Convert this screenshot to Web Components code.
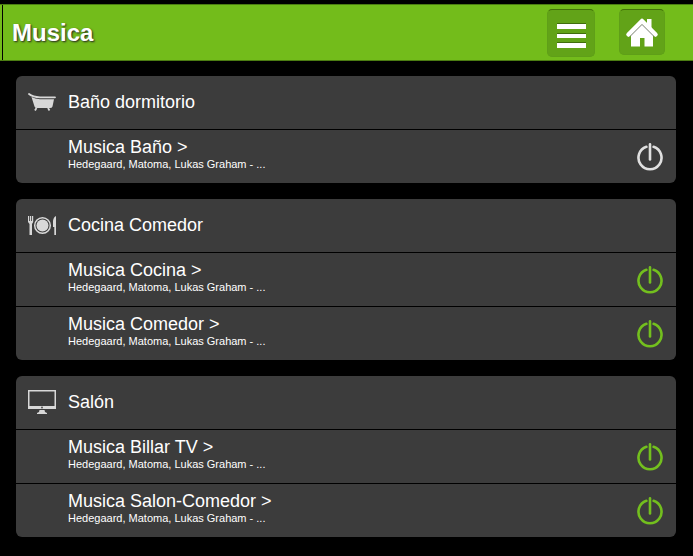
<!DOCTYPE html>
<html lang="es">
<head>
<meta charset="UTF-8">
<meta name="viewport" content="width=device-width, initial-scale=1">
<title>Musica</title>
<style>
    body {
        margin: 0;
        background: #000;
        color: #fff;
        font-family: "Liberation Sans", Arial, sans-serif;
    }
    main {
        display: flex;
        flex-direction: column;
        gap: 16px;
        padding: 15px 17px 16px 16px;
    }
</style>
</head>
<body>
<app-header heading="Musica"></app-header>
<main>
    <room-card name="Baño dormitorio" icon="bath">
        <music-zone name="Musica Baño"></music-zone>
    </room-card>
    <room-card name="Cocina Comedor" icon="dining">
        <music-zone name="Musica Cocina" on></music-zone>
        <music-zone name="Musica Comedor" on></music-zone>
    </room-card>
    <room-card name="Salón" icon="screen">
        <music-zone name="Musica Billar TV" on></music-zone>
        <music-zone name="Musica Salon-Comedor" on></music-zone>
    </room-card>
</main>

<script>
const roomIcons = {
    bath: `
        <path d="M1 4 Q5 7 12 7.3 L27 7.3" fill="none" stroke="#d8d8d8" stroke-width="1.8" stroke-linecap="round"/>
        <path d="M3.5 7 Q7 9 12 9.2 H26 L24.5 16.5 Q24 18 22 18 H9 Q7 18 6.5 16.5 Z"/>
        <path d="M8.5 18 L7 20.5 M20 18 L21.5 20.5" fill="none" stroke="#d8d8d8" stroke-width="1.8"/>`,
    dining: `
        <path d="M0 3 H1.2 V8 H2 V3 H3.2 V8 H4 V3 H5.2 V9 L4 11 V22 H1.5 V11 L0 9 Z"/>
        <circle cx="14.5" cy="12.5" r="7.8" fill="none" stroke="#d8d8d8" stroke-width="1.5"/>
        <circle cx="14.5" cy="12.5" r="6"/>
        <path d="M28 3 V22 H26.3 V14 H25 V8 Q25.5 4 28 3 Z"/>`,
    screen: `
        <path fill-rule="evenodd" d="M0 0 H28 V19 H0 Z M1.5 1.5 V16 H26.5 V1.5 Z"/>
        <circle cx="14" cy="17.5" r="1" fill="#555"/>
        <path d="M11.5 20 H16.5 L17 22 L19 23 V24 H9 V23 L11 22 Z"/>`
};

class AppHeader extends HTMLElement {
    constructor() {
        super();
        this.attachShadow({ mode: 'open' });
    }

    connectedCallback() {
        this.shadowRoot.innerHTML = `
            <style>
                :host {
                    display: block;
                    padding-top: 4px;
                }
                header {
                    display: flex;
                    align-items: flex-start;
                    box-sizing: border-box;
                    height: 57px;
                    padding: 4px 28px 0 0;
                    border: solid #4c7d12;
                    border-width: 1px 0;
                    background: linear-gradient(90deg, transparent 2px, #000 2px, #000 3px, transparent 3px) #73bc1b;
                }
                h1 {
                    flex: 1;
                    margin: 0;
                    padding-left: 12px;
                    font-size: 24px;
                    line-height: 48px;
                    text-shadow: 1px 1px 2px #222;
                }
                nav {
                    display: flex;
                    gap: 24px;
                }
                button {
                    display: block;
                    width: 48px;
                    height: 48px;
                    padding: 0;
                    border: 1px solid #5f9f18;
                    border-top-color: #417008;
                    border-radius: 5px;
                    background: #62a318;
                    cursor: pointer;
                }
                .home {
                    width: 46px;
                    height: 46px;
                }
                svg {
                    display: block;
                    width: 100%;
                    height: 100%;
                }
            </style>
            <header>
                <h1>${this.getAttribute('heading')}</h1>
                <nav>
                    <button type="button" aria-label="Menú">
                        <svg viewBox="0 0 46 46" fill="#fff">
                            <path d="M9 13 H38 V14 H9 Z M9 23 H38 V24 H9 Z M9 32 H38 V33 H9 Z" fill="#3f6d0d"/>
                            <path d="M9 14 H38 V19 H9 Z M9 24 H38 V28 H9 Z M9 33 H38 V38 H9 Z"/>
                        </svg>
                    </button>
                    <button type="button" class="home" aria-label="Inicio">
                        <svg viewBox="0 0 44 44" fill="#fff">
                            <path d="M27 9 H31.5 V19 L27 14 Z"/>
                            <path d="M11 25 L22 14 L33 25 V36.5 H24.5 V28 H20 V36.5 H11 Z"/>
                            <path d="M8.5 24.5 L22 11 L35.5 24.5" fill="none" stroke="#fff" stroke-width="4.5" stroke-linejoin="round" stroke-linecap="round"/>
                            <path d="M10 26.5 L22 14.5 L34 26.5" fill="none" stroke="#888" stroke-width="1"/>
                        </svg>
                    </button>
                </nav>
            </header>
        `;
    }
}

customElements.define('app-header', AppHeader);

class RoomCard extends HTMLElement {
    constructor() {
        super();
        this.attachShadow({ mode: 'open' });
    }

    connectedCallback() {
        this.shadowRoot.innerHTML = `
            <style>
                :host {
                    display: block;
                    overflow: hidden;
                    border-radius: 6px;
                    background: #3c3c3c;
                }
                .room {
                    display: flex;
                    align-items: center;
                    gap: 12px;
                    box-sizing: border-box;
                    height: 53px;
                    padding: 0 12px 2px;
                }
                svg {
                    width: 28px;
                    height: 24px;
                    fill: #d8d8d8;
                }
                h2 {
                    margin: 0;
                    font-size: 18px;
                    font-weight: normal;
                    line-height: 20px;
                }
            </style>
            <section>
                <div class="room">
                    <svg viewBox="0 0 28 24" aria-hidden="true">${roomIcons[this.getAttribute('icon')]}</svg>
                    <h2>${this.getAttribute('name')}</h2>
                </div>
                <slot></slot>
            </section>
        `;
    }
}

customElements.define('room-card', RoomCard);

class MusicZone extends HTMLElement {
    constructor() {
        super();
        this.attachShadow({ mode: 'open' });
    }

    connectedCallback() {
        const name = this.getAttribute('name');
        this.shadowRoot.innerHTML = `
            <style>
                :host {
                    display: flex;
                    align-items: center;
                    justify-content: space-between;
                    box-sizing: border-box;
                    height: 54px;
                    padding: 0 12px 0 52px;
                    border-top: 1px solid #000;
                }
                a {
                    display: block;
                    flex: 1;
                    padding-bottom: 6px;
                    color: inherit;
                    text-decoration: none;
                }
                .name, .track {
                    display: block;
                }
                .name {
                    font-size: 18px;
                    line-height: 20px;
                }
                .track {
                    font-size: 11px;
                    line-height: 14px;
                }
                button {
                    display: block;
                    padding: 0;
                    border: 0;
                    background: none;
                    color: #e0e0e0;
                    cursor: pointer;
                }
                :host([on]) button {
                    color: #73bf1e;
                }
                svg {
                    display: block;
                    width: 28px;
                    height: 28px;
                }
            </style>
            <a href="#">
                <span class="name">${name} &gt;</span>
                <span class="track">Hedegaard, Matoma, Lukas Graham - ...</span>
            </a>
            <button type="button" aria-label="${name}" aria-pressed="${this.hasAttribute('on')}">
                <svg viewBox="0 0 28 28" fill="none" stroke="currentColor" stroke-width="2.6" stroke-linecap="round">
                    <path d="M10.4 3.8 A11.5 11.5 0 1 0 17.6 3.8"/>
                    <path d="M14 1.4 V16.5"/>
                </svg>
            </button>
        `;

        this.shadowRoot.querySelector('button').addEventListener('click', (e) => {
            this.toggleAttribute('on');
            e.currentTarget.setAttribute('aria-pressed', this.hasAttribute('on'));
        });
    }
}

customElements.define('music-zone', MusicZone);
</script>
</body>
</html>
